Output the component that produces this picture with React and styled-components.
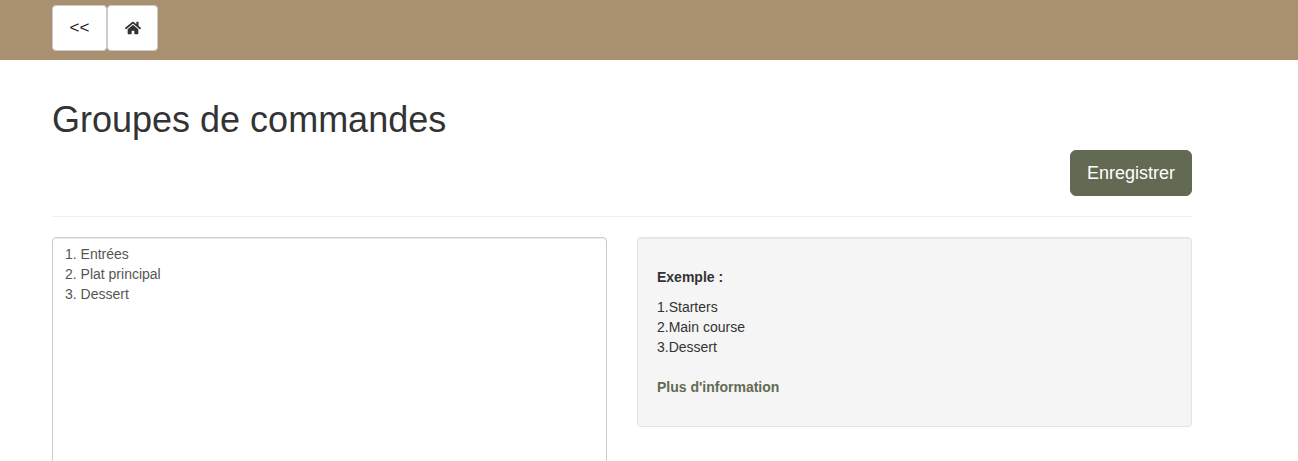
import React from "react";
import styled, { createGlobalStyle } from "styled-components";
import { FaHome } from "react-icons/fa";

const Global = createGlobalStyle`
  html, body { margin: 0; padding: 0; background: #fff; overflow: hidden; }
  body { font-family: "Liberation Sans", Arial, sans-serif; font-size: 14px; line-height: 20px; color: #333; }
  * { box-sizing: border-box; }
`;
const Header = styled.header`
  height: 60px; background: #a89070; padding: 5px 0 0 52px; display: flex; align-items: flex-start;
`;
const NavButton = styled.button`
  height: 46px; width: ${p => p.$w}px; background: #fff; border: 1px solid #ccc; border-radius: 4px;
  display: flex; align-items: center; justify-content: center; padding: 0 0 1px;
  font: 400 17px "Liberation Sans", Arial, sans-serif; color: #222;
`;
const Main = styled.main`
  width: 1140px; margin-left: 52px;
`;
const Title = styled.h1`
  margin: 0; padding-top: 40px; font-size: 36px; font-weight: 400; line-height: 40px; color: #333;
`;
const Actions = styled.div`
  display: flex; justify-content: flex-end; margin-top: 10px;
`;
const SaveButton = styled.button`
  height: 46px; width: 122px; background: #636a54; color: #fff; border: 1px solid #636a54; border-radius: 6px;
  font: 18px/24px "Liberation Sans", Arial, sans-serif; padding: 0;
`;
const Rule = styled.hr`
  margin: 20px 0; border: 0; border-top: 1px solid #eee;
`;
const Columns = styled.div`
  display: grid; grid-template-columns: 555px 555px; gap: 30px; align-items: start;
`;
const Editor = styled.textarea`
  display: block; width: 555px; height: 300px; padding: 6px 12px; border: 1px solid #ccc; border-radius: 4px;
  font: 14px/20px "Liberation Sans", Arial, sans-serif; color: #555; resize: none; outline: none;
  box-shadow: inset 0 1px 1px rgba(0,0,0,.075); background: #fff;
`;
const Well = styled.section`
  height: 190px; padding: 19px; background: #f5f5f5; border: 1px solid #e3e3e3; border-radius: 4px;
  box-shadow: inset 0 1px 1px rgba(0,0,0,.05);
`;
const Heading = styled.p`
  margin: 10px 0 10px; font-weight: bold;
`;
const Example = styled.div`
  margin-bottom: 20px;
`;
const InfoLink = styled.a`
  font-weight: bold; color: #636a54; text-decoration: none;
`;

export default function App() {
  return (
    <>
      <Global />
      <Header>
        <NavButton $w={55}>&lt;&lt;</NavButton>
        <NavButton $w={51}><FaHome size={16} color="#333" /></NavButton>
      </Header>
      <Main>
        <Title>Groupes de commandes</Title>
        <Actions><SaveButton>Enregistrer</SaveButton></Actions>
        <Rule />
        <Columns>
          <Editor readOnly value={"1. Entrées\n2. Plat principal\n3. Dessert"} />
          <Well>
            <Heading>Exemple :</Heading>
            <Example>1.Starters<br />2.Main course<br />3.Dessert</Example>
            <InfoLink href="#">Plus d'information</InfoLink>
          </Well>
        </Columns>
      </Main>
    </>
  );
}
